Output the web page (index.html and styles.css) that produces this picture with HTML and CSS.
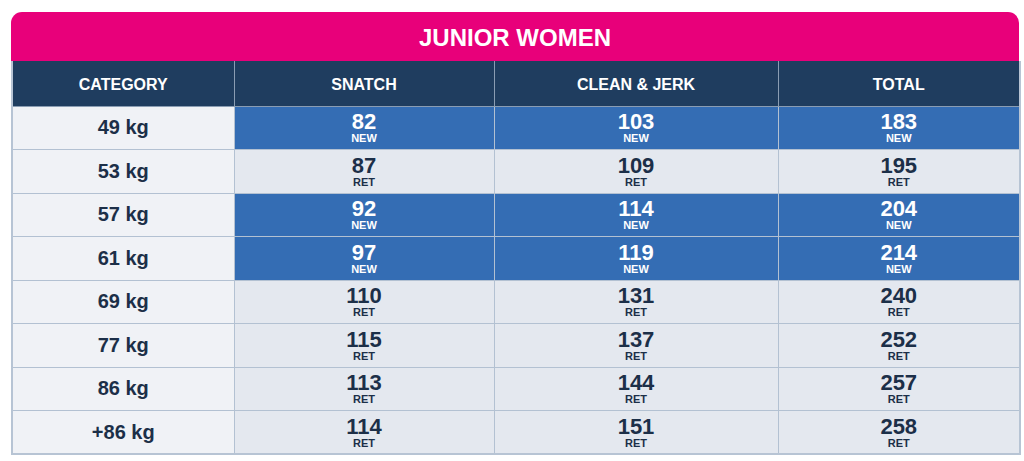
FILE: index.html
```html
<!DOCTYPE html>
<html>
<head>
<meta charset="utf-8">
<link rel="stylesheet" href="styles.css">
</head>
<body>
<div class="card">
  <div class="title">JUNIOR WOMEN</div>
  <table class="records">
    <colgroup>
      <col class="c-cat"><col class="c-sn"><col class="c-cj"><col class="c-tot">
    </colgroup>
    <thead>
      <tr><th>CATEGORY</th><th>SNATCH</th><th>CLEAN &amp; JERK</th><th>TOTAL</th></tr>
    </thead>
    <tbody>
      <tr><td class="cat">49 kg</td>
        <td class="new"><span class="num">82</span><span class="tag">NEW</span></td>
        <td class="new"><span class="num">103</span><span class="tag">NEW</span></td>
        <td class="new"><span class="num">183</span><span class="tag">NEW</span></td></tr>
      <tr><td class="cat">53 kg</td>
        <td class="ret"><span class="num">87</span><span class="tag">RET</span></td>
        <td class="ret"><span class="num">109</span><span class="tag">RET</span></td>
        <td class="ret"><span class="num">195</span><span class="tag">RET</span></td></tr>
      <tr><td class="cat">57 kg</td>
        <td class="new"><span class="num">92</span><span class="tag">NEW</span></td>
        <td class="new"><span class="num">114</span><span class="tag">NEW</span></td>
        <td class="new"><span class="num">204</span><span class="tag">NEW</span></td></tr>
      <tr><td class="cat">61 kg</td>
        <td class="new"><span class="num">97</span><span class="tag">NEW</span></td>
        <td class="new"><span class="num">119</span><span class="tag">NEW</span></td>
        <td class="new"><span class="num">214</span><span class="tag">NEW</span></td></tr>
      <tr><td class="cat">69 kg</td>
        <td class="ret"><span class="num">110</span><span class="tag">RET</span></td>
        <td class="ret"><span class="num">131</span><span class="tag">RET</span></td>
        <td class="ret"><span class="num">240</span><span class="tag">RET</span></td></tr>
      <tr><td class="cat">77 kg</td>
        <td class="ret"><span class="num">115</span><span class="tag">RET</span></td>
        <td class="ret"><span class="num">137</span><span class="tag">RET</span></td>
        <td class="ret"><span class="num">252</span><span class="tag">RET</span></td></tr>
      <tr><td class="cat">86 kg</td>
        <td class="ret"><span class="num">113</span><span class="tag">RET</span></td>
        <td class="ret"><span class="num">144</span><span class="tag">RET</span></td>
        <td class="ret"><span class="num">257</span><span class="tag">RET</span></td></tr>
      <tr><td class="cat">+86 kg</td>
        <td class="ret"><span class="num">114</span><span class="tag">RET</span></td>
        <td class="ret"><span class="num">151</span><span class="tag">RET</span></td>
        <td class="ret"><span class="num">258</span><span class="tag">RET</span></td></tr>
    </tbody>
  </table>
</div>
</body>
</html>
```

FILE: styles.css
```css
html, body {
  margin: 0;
  padding: 0;
  background: #ffffff;
}
body {
  font-family: "Liberation Sans", Arial, sans-serif;
  color: #1c2f48;
}
.card {
  margin: 12px 0 0 11px;
  width: 1008px;
}
.title {
  height: 49px;
  background: #e8007a;
  border-radius: 11px 11px 0 0;
  color: #ffffff;
  font-weight: 700;
  font-size: 24px;
  display: flex;
  align-items: center;
  justify-content: center;
  padding-top: 2px;
  box-sizing: border-box;
}
.records {
  width: 1008px;
  border-collapse: collapse;
  table-layout: fixed;
  border-left: 2px solid #b7c4d4;
  border-right: 2px solid #b7c4d4;
  border-bottom: 2px solid #b7c4d4;
}
.c-cat { width: 222px; }
.c-sn { width: 260px; }
.c-cj { width: 284px; }
.c-tot { width: 242px; }
.records th {
  height: 45px;
  padding: 3px 0 0 0;
  box-sizing: border-box;
  background: #1f3d5f;
  color: #ffffff;
  font-size: 16px;
  font-weight: 700;
  border-left: 1px solid #8a9db3;
  border-bottom: 1px solid #8a9db3;
}
.records th:first-child { border-left: none; }
.records td {
  height: 43.5px;
  padding: 0;
  text-align: center;
  border: 1px solid #b3c1d2;
  box-sizing: border-box;
}
.records td.cat {
  background: #f0f2f6;
  font-size: 20px;
  font-weight: 700;
}
.records td.ret {
  background: #e4e8ef;
}
.records td.new {
  background: #346db4;
  color: #ffffff;
}
.num, .tag {
  display: block;
  font-weight: 700;
}
.num {
  font-size: 22px;
  line-height: 20px;
  padding-top: 1px;
}
.tag {
  font-size: 11px;
  line-height: 11px;
  padding-top: 1px;
}
```
